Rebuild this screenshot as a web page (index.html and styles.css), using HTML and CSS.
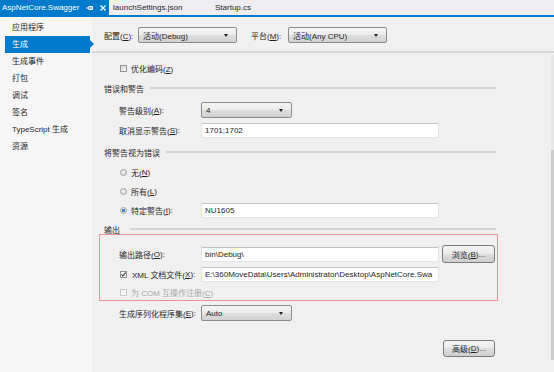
FILE: index.html
```html
<!DOCTYPE html>
<html lang="zh-CN">
<head>
    <meta charset="UTF-8">
    <title>AspNetCore.Swagger - 生成</title>
    <link rel="stylesheet" href="styles.css">
</head>
<body>
    <div class="tabs">
        <div class="tab active">
            <span class="tab-title">AspNetCore.Swagger</span>
            <svg class="pin" width="8" height="6" viewBox="0 0 8 6">
                <path d="M0 3h3M3 1v4M3 1.5h3.5v3H3M4 3h3" stroke="#fff" stroke-width="1" fill="none"/>
            </svg>
            <svg class="close" width="6" height="6" viewBox="0 0 6 6">
                <path d="M0.5 0.5l5 5M5.5 0.5l-5 5" stroke="#fff" stroke-width="1.3"/>
            </svg>
        </div>
        <div class="tab">launchSettings.json</div>
        <div class="tab">Startup.cs</div>
    </div>

    <div class="main">
        <nav class="nav">
            <div class="nav-item">应用程序</div>
            <div class="nav-item selected">生成</div>
            <div class="nav-item">生成事件</div>
            <div class="nav-item">打包</div>
            <div class="nav-item">调试</div>
            <div class="nav-item">签名</div>
            <div class="nav-item">TypeScript 生成</div>
            <div class="nav-item">资源</div>
        </nav>

        <div class="content">
            <div class="config-bar">
                <span class="config-label">配置(<u>C</u>):</span>
                <div class="select wide">活动(Debug)</div>
                <span class="config-label platform">平台(<u>M</u>):</span>
                <div class="select wide">活动(Any CPU)</div>
            </div>

            <div class="body">
                <div class="form">
                    <div class="check-row first">
                        <span class="checkbox"></span>
                        <span>优化编码(<u>Z</u>)</span>
                    </div>

                    <div class="group-head">错误和警告</div>
                    <div class="field-row spaced">
                        <span class="field-label">警告级别(<u>A</u>):</span>
                        <div class="select narrow">4</div>
                    </div>
                    <div class="field-row">
                        <span class="field-label">取消显示警告(<u>S</u>):</span>
                        <div class="input">1701;1702</div>
                    </div>

                    <div class="group-head spaced">将警告视为错误</div>
                    <div class="field-row radio-row first-radio">
                        <span class="field-label"><span class="radio"></span>无(<u>N</u>)</span>
                    </div>
                    <div class="field-row radio-row">
                        <span class="field-label"><span class="radio"></span>所有(<u>L</u>)</span>
                    </div>
                    <div class="field-row radio-row">
                        <span class="field-label"><span class="radio on"></span>特定警告(<u>I</u>):</span>
                        <div class="input">NU1605</div>
                    </div>

                    <div class="group-head short">输出</div>
                    <div class="highlight">
                        <div class="field-row">
                            <span class="field-label">输出路径(<u>O</u>):</span>
                            <div class="input">bin\Debug\</div>
                            <div class="btn browse">浏览(<u>B</u>)...</div>
                        </div>
                        <div class="field-row">
                            <span class="field-label"><span class="checkbox checked">
                                <svg width="5" height="5" viewBox="0 0 5 5"><path d="M0.4 2.4l1.4 1.6L4.6 0.6" stroke="#333" stroke-width="1.1" fill="none"/></svg>
                            </span>XML 文档文件(<u>X</u>):</span>
                            <div class="input">E:\360MoveData\Users\Administrator\Desktop\AspNetCore.Swa</div>
                        </div>
                        <div class="field-row com-row disabled">
                            <span class="checkbox"></span>
                            <span>为 COM 互操作注册(<u>C</u>)</span>
                        </div>
                    </div>

                    <div class="field-row serial-row">
                        <span class="field-label">生成序列化程序集(<u>E</u>):</span>
                        <div class="select narrow">Auto</div>
                    </div>

                    <div class="action-row">
                        <div class="btn">高级(<u>D</u>)...</div>
                    </div>
                </div>
                <div class="spacer"></div>
                <div class="scrollbar"><div class="thumb"></div></div>
            </div>
        </div>
    </div>
</body>
</html>
```

FILE: styles.css
```css
body {
    margin: 0;
    width: 554px;
    height: 372px;
    overflow: hidden;
    font-family: "Liberation Sans", "Noto Sans CJK SC", sans-serif;
    font-size: 8px;
    color: #1e1e1e;
    background: #f0f0f0;
}

u {
    text-decoration-thickness: 1px;
    text-underline-offset: 1px;
}

/* document tabs */

.tabs {
    display: flex;
    height: 15px;
    background: #eeeef2;
    border-bottom: 2px solid #007acc;
}

.tab {
    display: flex;
    align-items: center;
    width: 102px;
    height: 15px;
    padding-left: 4px;
    box-sizing: border-box;
    white-space: nowrap;
}

.tab.active {
    width: 109px;
    padding-left: 2px;
    background: #007acc;
    color: #fff;
}

.tab-title {
    width: 84px;
}

.pin {
    margin-right: 6px;
}

/* left navigation */

.main {
    display: flex;
    height: 355px;
}

.nav {
    width: 92px;
    padding-top: 2px;
    background: #f6f6f6;
    flex-shrink: 0;
}

.nav-item {
    position: relative;
    width: 85px;
    height: 17px;
    line-height: 17px;
    margin-left: 5px;
    padding-left: 7px;
    box-sizing: border-box;
    white-space: nowrap;
}

.nav-item.selected {
    background: #007acc;
    color: #fff;
}

.nav-item.selected::after {
    content: "";
    position: absolute;
    right: -4px;
    top: 4px;
    border-left: 4px solid #007acc;
    border-top: 4px solid transparent;
    border-bottom: 4px solid transparent;
}

/* property page */

.content {
    flex: 1;
    display: flex;
    flex-direction: column;
}

.config-bar {
    display: flex;
    align-items: center;
    height: 32px;
    padding-top: 2px;
    padding-left: 12px;
    border-bottom: 2px solid #d6d6d6;
}

.config-label {
    width: 34px;
    white-space: nowrap;
}

.config-label.platform {
    width: 37px;
    margin-left: 14px;
}

.select {
    position: relative;
    display: flex;
    align-items: center;
    height: 16px;
    padding-left: 4px;
    box-sizing: border-box;
    border: 1px solid #8c8c8c;
    border-radius: 2px;
    background: linear-gradient(#f4f4f4, #ececec 50%, #dedede 50%, #d2d2d2);
    white-space: nowrap;
}

.select::after {
    content: "";
    position: absolute;
    right: 8px;
    top: 6px;
    border-top: 3px solid #222;
    border-left: 2.5px solid transparent;
    border-right: 2.5px solid transparent;
}

.select.wide {
    width: 99px;
}

.select.narrow {
    width: 91px;
}

.body {
    flex: 1;
    display: flex;
}

.form {
    width: 392px;
    padding-left: 12px;
    flex-shrink: 0;
}

.spacer {
    flex: 1;
}

.scrollbar {
    width: 3px;
    height: 305px;
    margin-top: 2px;
    background: #e6e6e6;
}

.thumb {
    height: 210px;
    margin-top: 95px;
    background: #cdcdcd;
}

.check-row {
    display: flex;
    align-items: center;
    height: 24px;
    padding-left: 16px;
}

.check-row.first {
    margin-top: 3px;
}

.checkbox {
    display: flex;
    align-items: center;
    justify-content: center;
    width: 7px;
    height: 7px;
    margin-right: 4px;
    box-sizing: border-box;
    border: 1px solid #939393;
    background: linear-gradient(135deg, #d8d8d8, #f8f8f8);
    flex-shrink: 0;
}

.checkbox.checked {
    margin-left: 1px;
    margin-right: 5px;
    background: #fbfbfb;
}

.radio {
    display: inline-block;
    width: 7px;
    height: 7px;
    margin-left: 1px;
    margin-right: 4px;
    border: 1px solid #a0a0a0;
    border-radius: 50%;
    background: radial-gradient(circle at 40% 40%, #f4f4f4, #d4d4d4);
    vertical-align: -1px;
    box-sizing: border-box;
}

.radio.on {
    background: radial-gradient(circle, #2a6ab8 0, #4b8fd8 1.4px, #e8e8e8 2px, #d0d0d0);
}

.group-head {
    display: flex;
    align-items: center;
    height: 16px;
    white-space: nowrap;
}

.group-head::after {
    content: "";
    flex: 1;
    height: 2px;
    margin-left: 6px;
    background: #d4d4d4;
}

.group-head.spaced {
    margin-top: 4px;
}

.group-head.short {
    height: 12px;
    margin-top: 3px;
}

.group-head.short::after {
    margin-left: 10px;
}

.field-row {
    display: flex;
    align-items: center;
    height: 20px;
    padding-left: 15px;
    white-space: nowrap;
}

.field-row.spaced {
    margin-top: 4px;
}

.field-label {
    display: flex;
    align-items: center;
    width: 82px;
    flex-shrink: 0;
}

.radio-row {
    height: 19px;
}

.radio-row.first-radio {
    margin-top: 3px;
}

.input {
    display: flex;
    align-items: center;
    width: 238px;
    height: 15px;
    padding-left: 3px;
    box-sizing: border-box;
    overflow: hidden;
    background: #fff;
    border: 1px solid #e4e5eb;
    border-top-color: #c2c3c8;
    white-space: nowrap;
}

.highlight {
    margin: -1px -2px 0 -5px;
    padding: 9px 0 0 4px;
    border: 1px solid #e89494;
}

.com-row {
    height: 16px;
    padding-left: 16px;
}

.disabled {
    color: #a6a6a6;
}

.disabled .checkbox {
    border-color: #c8c8c8;
    background: #f4f4f4;
}

.serial-row {
    margin-top: 2px;
}

.btn {
    display: flex;
    align-items: center;
    justify-content: center;
    width: 52px;
    height: 17px;
    box-sizing: border-box;
    border: 1px solid #7a7a7a;
    border-radius: 3px;
    background: linear-gradient(#f4f4f4, #ebebeb 50%, #dddddd 50%, #cfcfcf);
    white-space: nowrap;
}

.btn.browse {
    width: 53px;
    height: 18px;
    margin-left: 3px;
}

.action-row {
    display: flex;
    justify-content: flex-end;
    margin-top: 17px;
    padding-right: 1px;
}
```
